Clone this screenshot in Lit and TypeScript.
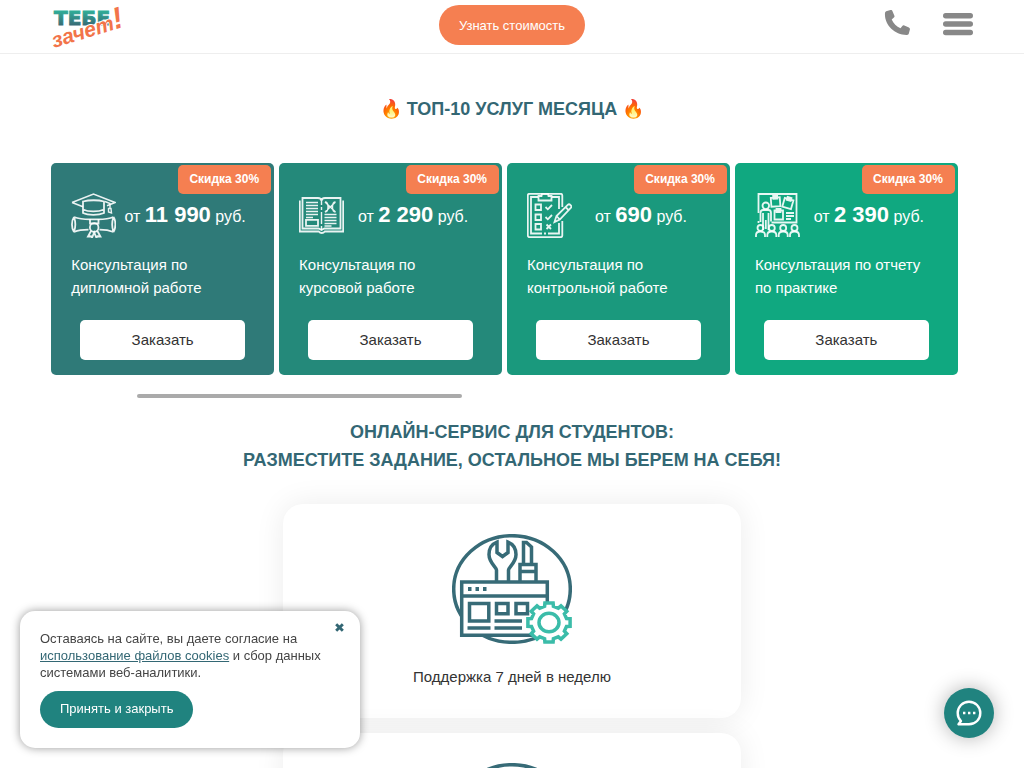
import { LitElement, html, css, svg } from "lit";
import { customElement, property, state } from "lit/decorators.js";

const capIcon = svg`
  <path d="M1 9.500 22.500 1l21.500 8.500-8 3.200M1 9.500l11 4.200" stroke-width="1.600"/>
  <path d="M12 8.500v11.500c5 2.400 15.500 2.400 21 0V8.500C27.500 6.800 18 6.800 12 8.500zM12 16.500c5.500 2.600 15 2.600 21 0"/>
  <path d="M34 8.500l5 2v4.500M37.500 15.500h2.500l.5 4.500-3-1z" stroke-width="1.400"/>
  <path d="M3 24c5 2 10 2.400 16 2.400h8c6 0 11-.4 15.500-2.400M3 39c5-2 9-2.300 14.500-2.300M42.500 39c-5-2-9-2.300-14-2.300M3 24C.3 28 .3 35 3 39M3 24c1.600 4.500 1.600 10.500 0 15M42.500 24c2.500 4 2.500 11 0 15M42.500 24c-1.600 4.500-1.600 10.500 0 15"/>
  <path d="M19 26v5.500M27.500 26v5.500M19 30.500h8.500"/>
  <circle cx="23.200" cy="34.500" r="4.300"/>
  <path d="M20 38l-3 5.500 3-.2 1 1.500 2.200-5.500 2.200 5.500 1-1.500 3 .2-3-5.500"/>`;

const bookIcon = svg`
  <path d="M.8 7.500v31h19c1.500 2 4.500 2 6 0h18.400v-31M3.500 5v30.500h16c1.500.200 2.500 1.500 3 1.500s1.500-1.300 3-1.500h16V5H26c-2 0-3.500 1-3.500 3-.200-2-1.500-3-3.500-3z"/>
  <path d="M22.500 8v4M22.500 14v3M22.500 19v12M22.500 33v4" stroke-width="1.400"/>
  <path d="M7 9.500h12M7 12.500h12M7 15.500h12M7 18.500h12M7 21.500h12M7 24.500h7M25.500 21.500h12M25.500 24.500h12M25.500 27.500h12M25.500 30.500h12M25.500 33h7" stroke-width="1.300"/>
  <path d="M7 26.800h12v6H7z"/>
  <path d="M26 9c4 0 4 10 0 10M36.500 9c-4 0-4 10 0 10M26 9l10.500 10M36.500 9 26 19" stroke-width="1.400"/>`;

const listIcon = svg`
  <path d="M35.300 28v14.500c0 1-.7 1.700-1.700 1.700H2.500c-1 0-1.700-.7-1.700-1.700V2.500C.8 1.500 1.500.8 2.500.8h31.100c1 0 1.700.7 1.700 1.700V14"/>
  <path d="M11 4H4v36.500h11M17 40.500h2M21 40.500h11V30M32 16V4h-7"/>
  <path d="M11.500 3h3L15 .8h6l.5 2.200h3v4.500h-13z"/>
  <path d="M8.500 11.500h5.500v5.500H8.500zM8.500 21.500h5.500V27H8.500zM8.500 31h5.500v5.500H8.500z"/>
  <path d="m18.500 14 2.300 2.300 4.200-4.300M18.500 24l2.300 2.300 4.200-4.300M19.500 31.500l4.500 4.500M24 31.500l-4.500 4.500"/>
  <path d="M27.500 29l2-6L41 11.700c1.500-1.300 4.300 1.500 3 3L32.800 26.500zM38.500 14l3.300 3.300M29.500 23l3.300 3.500"/>`;

const classIcon = svg`
  <path d="M3.500 20V1H41.500v28.500H16.500M3.500 28v2"/>
  <circle cx="10.800" cy="12.800" r="3.300"/>
  <path d="M8 37V20M5.500 29V20c0-2 1-3 2.500-3h5.500c1.500 0 2.500 1 2.500 3v8.500M13.500 20v17M10.800 27v9"/>
  <path d="M16 4.500h9v9h-9zM18.500 2.800h4v3h-4z" transform="rotate(-4 20 8)"/>
  <path d="M28.500 6h9v9h-9zM31 4.300h4v3h-4z" transform="rotate(16 33 10)"/>
  <path d="M19.500 17.500H28v9h-8.500zM21.500 16h4v3h-4zM31 20h8M31 23h8M31 26h5"/>
  <circle cx="5.500" cy="35" r="3"/><circle cx="16.800" cy="35" r="3"/><circle cx="28.200" cy="35" r="3"/><circle cx="39.500" cy="35" r="3"/>
  <path d="M1 44v-2c0-2 1.500-3.500 4.500-3.500S10 40 10 42v2M12.300 44v-2c0-2 1.500-3.500 4.500-3.500s4.500 1.500 4.500 3.500v2M23.700 44v-2c0-2 1.500-3.500 4.500-3.500s4.500 1.500 4.500 3.500v2M35 44v-2c0-2 1.500-3.500 4.500-3.500S44 40 44 42v2"/>`;

const services = [
  { price: "11 990", title: "Консультация по дипломной работе", color: "#2f7a78", icon: capIcon },
  { price: "2 290", title: "Консультация по курсовой работе", color: "#24897a", icon: bookIcon },
  { price: "690", title: "Консультация по контрольной работе", color: "#1a997d", icon: listIcon },
  { price: "2 390", title: "Консультация по отчету по практике", color: "#10a880", icon: classIcon },
];

/** Outline of an eight-toothed gear, slightly wider than it is tall. */
function gearPoints(cx: number, cy: number): string {
  const points: string[] = [];
  for (let tooth = 0; tooth < 8; tooth++) {
    const corners = [[-14, 18], [-11, 21.5], [11, 21.5], [14, 18]];
    for (const [offset, radius] of corners) {
      const a = ((tooth * 45 + offset) * Math.PI) / 180;
      points.push(`${(cx + radius * Math.sin(a)).toFixed(1)},${(cy - radius * 0.93 * Math.cos(a)).toFixed(1)}`);
    }
  }
  return points.join(" ");
}

@customElement("service-card")
class ServiceCard extends LitElement {
  @property({ attribute: false }) service: any;

  static styles = css`
    :host { display: block; min-width: 0; }
    .card {
      position: relative;
      padding: 30px 20px 15px;
      border-radius: 5px;
      color: #fff;
    }
    .badge {
      position: absolute;
      top: 2px;
      right: 3px;
      padding: 0 12px 0 11px;
      border-radius: 5px;
      background: #f57f51;
      font-size: 12px;
      font-weight: bold;
      line-height: 29px;
    }
    .top { display: flex; align-items: center; height: 45px; }
    .icon { flex: none; width: 45px; height: 45px; fill: none; stroke: #fff; stroke-width: 1.8; stroke-opacity: 0.9; }
    .price { flex: 1; padding-bottom: 2px; text-align: center; font-size: 16px; white-space: nowrap; }
    .price b { font-size: 22px; }
    .title { margin: 15px 0 21px; font-size: 15px; font-weight: normal; line-height: 23px; }
    .order {
      display: block;
      width: 165px;
      max-width: 100%;
      height: 40px;
      margin: 0 auto;
      padding: 0 0 2px;
      border: 0;
      border-radius: 5px;
      background: #fff;
      color: #333;
      font: 15px "Liberation Sans", Arial, sans-serif;
      cursor: pointer;
    }
  `;

  render() {
    const s = this.service;
    return html`
      <article class="card" style="background:${s.color}">
        <span class="badge">Скидка 30%</span>
        <div class="top">
          <svg class="icon" viewBox="0 0 45 45" aria-hidden="true">${s.icon}</svg>
          <div class="price">от <b>${s.price}</b> руб.</div>
        </div>
        <h3 class="title">${s.title}</h3>
        <button class="order" type="button">Заказать</button>
      </article>
    `;
  }
}

@customElement("app-root")
class AppRoot extends LitElement {
  @state() cookiesOpen = true;

  static styles = css`
    :host {
      display: block;
      height: 100vh;
      overflow-y: auto;
      scrollbar-width: none;
      background: #fff;
      color: #333;
      font-family: "Liberation Sans", Arial, sans-serif;
    }
    button { font-family: inherit; cursor: pointer; }
    .header {
      display: grid;
      grid-template-columns: 1fr auto 1fr;
      align-items: start;
      padding: 5px 5% 8px;
      border-bottom: 1px solid #eee;
    }
    .logo { display: block; width: 74px; height: 40px; }
    .logo svg { display: block; width: 74px; height: 48px; overflow: visible; }
    .word { font: bold 20px "DejaVu Sans", sans-serif; stroke: url(#tone); stroke-width: 1px; }
    .script { font: italic bold 21px "Liberation Sans", sans-serif; fill: #f2744a; stroke: #fff; stroke-width: 2px; paint-order: stroke; }
    .cost {
      height: 40px;
      padding: 0 20px;
      border: 0;
      border-radius: 20px;
      background: #f57f51;
      color: #fff;
      font-size: 13px;
    }
    .tools { display: flex; justify-content: flex-end; gap: 33px; padding-top: 5px; }
    .tool { display: block; padding: 0; border: 0; background: none; color: #888; }
    .tool svg { display: block; height: 26px; fill: currentColor; }
    .heading {
      margin: 0;
      color: #336774;
      font-size: 18px;
      font-weight: bold;
      line-height: 28px;
      text-align: center;
      text-transform: uppercase;
    }
    .main { padding: 41px 5% 30px; }
    .services {
      display: grid;
      grid-template-columns: repeat(4, 1fr);
      gap: 5px;
      margin: 40px 15px 19px 0;
    }
    .track { max-width: 750px; margin: 0 auto 20px; }
    .thumb { height: 4px; border-radius: 2px; background: #aaa; }
    .features { display: grid; gap: 15px; max-width: 458px; margin: 30px auto 0; }
    .feature {
      padding: 30px;
      border-radius: 20px;
      background: #fff;
      box-shadow: 0 0 30px rgba(0, 0, 0, 0.08);
      text-align: center;
    }
    .feature svg { display: block; width: 120px; height: 110px; margin: 0 auto 22px; fill: none; stroke: #376b77; stroke-width: 3.5; }
    .feature p { margin: 0; font-size: 15px; line-height: 22px; }
    .cookies {
      position: fixed;
      left: 20px;
      bottom: 20px;
      box-sizing: border-box;
      width: 340px;
      padding: 19px 20px 20px;
      border-radius: 15px;
      background: #fff;
      box-shadow: 0 0 10px rgba(0, 0, 0, 0.4);
      color: #444;
      font-size: 13px;
      line-height: 17px;
    }
    .cookies p { margin: 0 0 10px; }
    .cookies a { color: #336774; }
    .accept {
      display: block;
      height: 37px;
      padding: 0 20px 2px;
      border: 0;
      border-radius: 20px;
      background: #20837f;
      color: #fff;
      font-size: 13px;
    }
    .close {
      position: absolute;
      top: 8px;
      right: 12px;
      width: 17px;
      height: 17px;
      padding: 4px;
      border: 0;
      background: none;
    }
    .close svg { display: block; width: 9px; height: 9px; stroke: #336774; stroke-width: 3.2; }
    .chat {
      position: fixed;
      right: 30px;
      bottom: 30px;
      width: 50px;
      height: 50px;
      padding: 12px;
      border: 0;
      border-radius: 50%;
      background: #20837f;
      box-shadow: 0 0 20px rgba(0, 0, 0, 0.3);
    }
    .chat svg { display: block; width: 26px; height: 26px; fill: none; stroke: #fff; stroke-width: 2.4; }
  `;

  render() {
    return html`
      <header class="header">
        <a class="logo" href="#" aria-label="Тебе зачет!">
          <svg viewBox="0 0 74 48">
            <defs>
              <linearGradient id="tone" x1="0" y1="0" x2="0" y2="1">
                <stop offset="0.2" stop-color="#2fae98" /><stop offset="0.8" stop-color="#386b76" />
              </linearGradient>
            </defs>
            <text class="word" x="3" y="20" fill="url(#tone)">ТЕБЕ</text>
            <text class="script" x="3" y="43" transform="rotate(-17 3 43)">зачет<tspan font-size="30">!</tspan></text>
          </svg>
        </a>
        <button class="cost" type="button">Узнать стоимость</button>
        <div class="tools">
          <a class="tool" href="#" aria-label="Телефон">
            <svg width="26" viewBox="0 0 26 26"><path d="M3 1 6.500 0c.8-.2 1.600.2 1.900.9l2 4.800c.3.700.1 1.400-.5 1.900L7.700 9.500c1.700 4 4.800 7 8.800 8.700l1.800-2.300c.5-.6 1.300-.8 2-.5l4.600 2c.8.400 1.200 1.200 1 2l-1 3.800c-.2.900-.9 1.600-1.900 1.700C10.500 25.200 0 14.500 1 3c.1-1 .8-1.800 2-2z"/></svg>
          </a>
          <button class="tool" type="button" aria-label="Меню">
            <svg width="30" viewBox="0 0 30 26"><rect y="3" width="30" height="5.500" rx="2.700"/><rect y="11.300" width="30" height="5.500" rx="2.700"/><rect y="19.700" width="30" height="5.500" rx="2.700"/></svg>
          </button>
        </div>
      </header>
      <main class="main">
        <h2 class="heading">🔥 Топ-10 услуг месяца 🔥</h2>
        <section class="services">
          ${services.map((s) => html`<service-card .service=${s}></service-card>`)}
        </section>
        <div class="track"><div class="thumb" style="width:${(325 / 750) * 100}%"></div></div>
        <h2 class="heading">Онлайн-сервис для студентов:<br />разместите задание, остальное мы берем на себя!</h2>
        <section class="features">
          <article class="feature">
            <svg viewBox="0 0 120 110" aria-hidden="true">
              <ellipse cx="60" cy="55" rx="58.300" ry="53.300" />
              <path d="M9.700 48h85.600v53.300H9.700z" fill="#fff" />
              <path d="M9.700 62h85.600M15.500 94h23M42.500 94H70M42.500 87H70M17.500 69.500h19.300V87H17.500zM44.500 69.500H56v10.300H44.500zM64 69.500h11.500v10.300H64z" />
              <path d="M16 55h3.500M23.500 55H27M31 55h3.500" stroke-width="3.800" />
              <path d="M44.500 47V36c0-3-7.500-7-7.500-15.500C37 14.500 40 10 45 8v10.500l5.500 4 5.500-4V8c5 2 8 6.500 8 12.500C64 29 56.500 33 56.500 36v11" />
              <path d="M68 47V30.500h16V47M68 37.500h16M71.500 30V8.500h3l5 4.500v17" />
              <g stroke="#3bbca9">
                <polygon points=${gearPoints(97, 88.5)} fill="#fff" />
                <ellipse cx="97" cy="88.500" rx="10" ry="9.300" />
              </g>
            </svg>
            <p>Поддержка 7 дней в неделю</p>
          </article>
          <article class="feature">
            <svg viewBox="0 0 120 110" aria-hidden="true"><ellipse cx="60" cy="55" rx="58.300" ry="53.300" /></svg>
          </article>
        </section>
      </main>
      ${this.cookiesOpen
        ? html`<aside class="cookies">
            <button class="close" type="button" aria-label="Закрыть" @click=${() => (this.cookiesOpen = false)}>
              <svg viewBox="0 0 10 10"><path d="M1.300 1.300l7.400 7.400M8.700 1.300 1.300 8.700" /></svg>
            </button>
            <p>Оставаясь на сайте, вы даете согласие на <a href="#">использование файлов cookies</a> и сбор данных системами веб-аналитики.</p>
            <button class="accept" type="button" @click=${() => (this.cookiesOpen = false)}>Принять и закрыть</button>
          </aside>`
        : ""}
      <button class="chat" type="button" aria-label="Чат">
        <svg viewBox="0 0 26 26"><path d="M2.500 24.300H13c6.500 0 11.300-5 11.300-11.300S19.300 1.700 13 1.700 1.700 6.700 1.700 13c0 3 1.200 6 3.300 8z" stroke-linejoin="round" /><path d="M7 13h2.400M12 13h2.400M17 13h2.400" /></svg>
      </button>
    `;
  }
}
